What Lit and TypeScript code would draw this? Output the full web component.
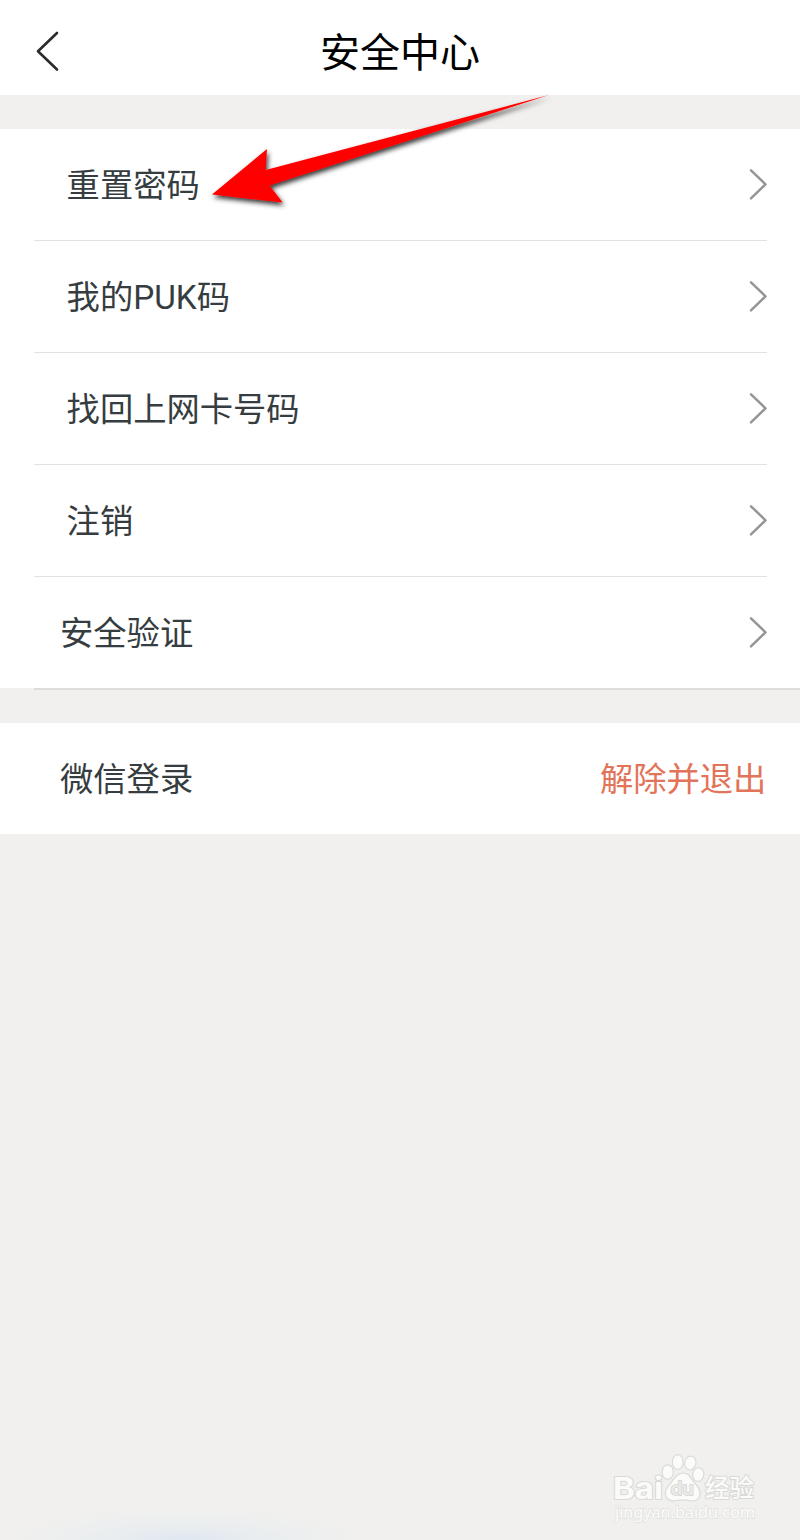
import { LitElement, html, css, svg } from "lit";
import { customElement, property } from "lit/decorators.js";
import { classMap } from "lit/directives/class-map.js";

@customElement("setting-row")
class SettingRow extends LitElement {
  @property() label = "";
  @property() action = "";
  @property({ type: Boolean }) tight = false;
  @property({ type: Boolean }) arrow = false;
  @property() line = "none";

  static styles = css`
    :host { display: block; }
    .row {
      display: flex;
      align-items: center;
      justify-content: space-between;
      box-sizing: border-box;
      height: 111px;
      padding: 0 33px 0 66.6px;
      color: #363d40;
      font-size: 33.3px;
      line-height: 48px;
      white-space: nowrap;
    }
    .row span { padding-top: 2px; }
    .tight { padding-left: 60px; }
    .chevron { display: block; width: 20px; height: 34px; margin-bottom: 1px; }
    .row .action { margin-right: 0.6px; color: #e2745a; }
    .line { height: 1px; margin: 0 33px 0 34px; background: #e2e2e2; }
    .edge { height: 2px; margin: 0 0 0 34px; background: #dedddc; }
  `;

  render() {
    return html`
      <div class=${classMap({ row: true, tight: this.tight })}>
        <span>${this.label}</span>
        ${this.arrow
          ? html`<svg class="chevron" viewBox="0 0 20 34" fill="none" stroke="#959595" stroke-width="2.5" stroke-linecap="round" stroke-linejoin="round">
              <path d="M4 3.300 L18.500 17.300 L4 31.300" />
            </svg>`
          : html`<span class="action">${this.action}</span>`}
      </div>
      ${this.line === "none" ? "" : html`<div class=${this.line}></div>`}
    `;
  }
}

@customElement("app-root")
class AppRoot extends LitElement {
  static styles = css`
    :host {
      display: block;
      position: relative;
      height: 1540px;
      overflow: hidden;
      background: #f1f0ee;
      font-family: "Roboto", "Noto Sans CJK SC", sans-serif;
    }
    .header {
      display: grid;
      grid-template-columns: 100px 1fr 100px;
      align-items: center;
      height: 95px;
      margin-bottom: 34px;
      background: #fff;
    }
    .back { display: block; width: 30px; height: 46px; margin: 7px 0 0 32px; }
    .title {
      margin: 0;
      padding-top: 12px;
      text-align: center;
      color: #000;
      font-size: 40px;
      font-weight: 400;
      line-height: 58px;
    }
    .group { background: linear-gradient(#fff, #fff) no-repeat 0 0 / 100% 559px; }
    .login { margin-top: 33px; background: #fff; }
    .arrow { position: absolute; left: 200px; top: 80px; width: 370px; height: 140px; }
    .glow {
      position: absolute;
      left: 5px;
      bottom: -32px;
      width: 360px;
      height: 64px;
      background: radial-gradient(closest-side, #dfe7f0, rgba(228, 235, 241, .6) 40%, rgba(238, 240, 240, 0));
    }
    .mark { position: absolute; left: 600px; top: 1445px; width: 170px; height: 85px; }
    .brand {
      font-family: "Inter", "Noto Sans CJK SC", sans-serif;
      font-weight: 700;
      fill: #fbfbfa;
      stroke: #d9d9d7;
      stroke-width: 2px;
      paint-order: stroke;
    }
    .han { font-weight: 500; }
    .du { font-weight: 600; fill: #ebebe9; stroke: #d2d2d0; stroke-width: 1.4px; }
    .site {
      font-family: "Noto Sans", sans-serif;
      fill: #fdfdfc;
      stroke: #dededc;
      stroke-width: 1.3px;
      paint-order: stroke;
    }
  `;

  private watermark() {
    return svg`
      <g fill="#fbfbfa" stroke="#dbdbd9" stroke-width="1.2">
        <ellipse cx="67.700" cy="27" rx="5.6" ry="7.2" />
        <ellipse cx="77.7" cy="17" rx="5.4" ry="7.4" />
        <ellipse cx="90.300" cy="18" rx="5.600" ry="7" transform="rotate(12 90 18)" />
        <ellipse cx="98.3" cy="29.5" rx="5.6" ry="6.8" transform="rotate(8 98 29)" />
        <path d="M83 28 C76 28 74 35 70 39 C66 43 64.5 46 65.5 50 C67 56 72 56.500 77 55.500 C81 54.700 85 54.700 89 55.500 C94 56.500 99 55.500 100 50 C101 45 98 42 95 38.500 C91 34 90 28 83 28 Z" />
      </g>
      <text class="brand" x="13" y="53.500" font-size="30" textLength="50" lengthAdjust="spacingAndGlyphs">Bai</text>
      <text class="brand du" x="70.500" y="49.500" font-size="18" textLength="23.500" lengthAdjust="spacingAndGlyphs">du</text>
      <text class="brand han" x="105" y="52" font-size="25" textLength="49" lengthAdjust="spacingAndGlyphs">经验</text>
      <text class="site" x="15" y="72.500" font-size="16" textLength="140" lengthAdjust="spacingAndGlyphs">jingyan.baidu.com</text>
    `;
  }

  render() {
    return html`
      <header class="header">
        <svg class="back" viewBox="0 0 30 46" fill="none" stroke="#2b2b2b" stroke-width="2.6" stroke-linecap="round" stroke-linejoin="round">
          <path d="M25 5 L6 23.300 L25 41.500" />
        </svg>
        <h1 class="title">安全中心</h1>
      </header>
      <main>
        <section class="group">
          <setting-row label="重置密码" arrow line="line"></setting-row>
          <setting-row label="我的PUK码" arrow line="line"></setting-row>
          <setting-row label="找回上网卡号码" arrow line="line"></setting-row>
          <setting-row label="注销" arrow line="line"></setting-row>
          <setting-row label="安全验证" tight arrow line="edge"></setting-row>
        </section>
        <section class="login">
          <setting-row label="微信登录" action="解除并退出" tight></setting-row>
        </section>
      </main>
      <svg class="arrow" viewBox="0 0 370 140">
        <defs>
          <filter id="shade" x="-10%" y="-10%" width="120%" height="130%">
            <feDropShadow dx="1.500" dy="3" stdDeviation="2.400" flood-color="#000" flood-opacity=".8" />
          </filter>
        </defs>
        <path filter="url(#shade)" fill="#f00" d="M12 114.500 L67 69 L65.700 90 L349 15 L69.500 105.500 L82.700 122.500 Z" />
      </svg>
      <div class="glow"></div>
      <svg class="mark" viewBox="0 0 170 85">${this.watermark()}</svg>
    `;
  }
}
